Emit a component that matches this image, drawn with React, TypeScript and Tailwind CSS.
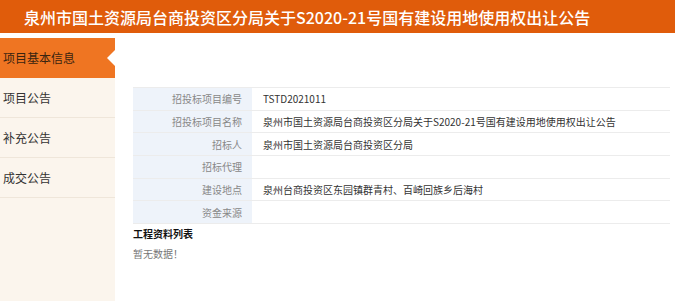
import React from "react";

const rows: [string, string][] = [
  ["招投标项目编号", "TSTD2021011"],
  ["招投标项目名称", "泉州市国土资源局台商投资区分局关于S2020-21号国有建设用地使用权出让公告"],
  ["招标人", "泉州市国土资源局台商投资区分局"],
  ["招标代理", ""],
  ["建设地点", "泉州台商投资区东园镇群青村、百崎回族乡后海村"],
  ["资金来源", ""],
];

export default function App() {
  return (
    <div
      className="w-[675px] h-[301px] bg-white overflow-hidden flex flex-col"
      style={{ fontFamily: '"Noto Sans CJK SC", "Noto Sans", sans-serif' }}
    >
      <div className="h-[33px] shrink-0 bg-[#e05c0b] flex items-center pl-[24px]">
        <span className="text-white text-[16px] font-medium leading-none">
          泉州市国土资源局台商投资区分局关于S2020-21号国有建设用地使用权出让公告
        </span>
      </div>
      <div className="flex flex-1 pt-[5px]">
        <div className="w-[115px] shrink-0 bg-[#fbf5ed] flex flex-col">
          <div className="relative h-[40px] bg-[#ef7522] flex items-center pl-[3px] text-[12px] text-[#3a2410]">
            项目基本信息
            <div className="absolute right-0 top-[12px] w-0 h-0 border-y-[8px] border-y-transparent border-r-[8px] border-r-white" />
          </div>
          {["项目公告", "补充公告", "成交公告"].map((t) => (
            <div
              key={t}
              className="h-[40px] border-b border-[#efe6da] flex items-center pl-[3px] text-[12px] text-[#333]"
            >
              {t}
            </div>
          ))}
        </div>
        <div className="flex-1 pl-[18px] pr-[5px] pt-[49px]">
          <div className="border-t border-[#ececec]">
            {rows.map(([k, v]) => (
              <div key={k} className="flex h-[22.67px] border-b border-[#ececec]">
                <div className="w-[119px] shrink-0 bg-[#eef3fa] text-right pr-[10px] text-[10px] text-[#888] flex items-center justify-end">
                  {k}
                </div>
                <div className="flex-1 pl-[11px] text-[10px] text-[#333] flex items-center">
                  {v}
                </div>
              </div>
            ))}
          </div>
          <div className="mt-[2px] text-[10px] font-bold text-[#111]">工程资料列表</div>
          <div className="mt-[5px] text-[10px] text-[#777]">暂无数据！</div>
        </div>
      </div>
    </div>
  );
}
